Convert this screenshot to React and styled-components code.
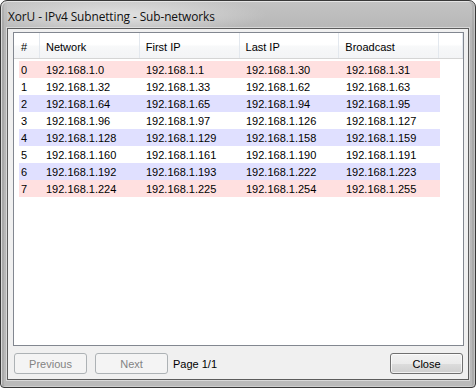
import React from "react";
import styled, { createGlobalStyle } from "styled-components";

const GlobalStyle = createGlobalStyle`
  html, body {
    margin: 0;
    padding: 0;
    background: #ffffff;
  }
  body {
    font-family: "Liberation Sans", Arial, sans-serif;
    font-size: 11px;
  }
`;

const subnets = [
  ["192.168.1.0", "192.168.1.1", "192.168.1.30", "192.168.1.31"],
  ["192.168.1.32", "192.168.1.33", "192.168.1.62", "192.168.1.63"],
  ["192.168.1.64", "192.168.1.65", "192.168.1.94", "192.168.1.95"],
  ["192.168.1.96", "192.168.1.97", "192.168.1.126", "192.168.1.127"],
  ["192.168.1.128", "192.168.1.129", "192.168.1.158", "192.168.1.159"],
  ["192.168.1.160", "192.168.1.161", "192.168.1.190", "192.168.1.191"],
  ["192.168.1.192", "192.168.1.193", "192.168.1.222", "192.168.1.223"],
  ["192.168.1.224", "192.168.1.225", "192.168.1.254", "192.168.1.255"],
];

// first and last subnet are pink, the rest alternate white / lavender
const rowTone = (i, n) => {
  if (i === 0 || i === n - 1) return "pink";
  return i % 2 === 0 ? "blue" : "plain";
};

const App = () => {
  return (
    <>
      <GlobalStyle />
      <Window>
        <TitleBar>
          <Title>XorU - IPv4 Subnetting - Sub-networks</Title>
        </TitleBar>
        <Client>
          <ListView>
            <Header>
              <HeadCell width={26}>#</HeadCell>
              <HeadCell width={100}>Network</HeadCell>
              <HeadCell width={100}>First IP</HeadCell>
              <HeadCell width={100}>Last IP</HeadCell>
              <HeadCell width={100}>Broadcast</HeadCell>
              <HeadFiller />
            </Header>
            <Rows>
              {subnets.map((s, i) => (
                <Row key={i} tone={rowTone(i, subnets.length)}>
                  <IndexCell>{i}</IndexCell>
                  {s.map((ip) => (
                    <Cell key={ip}>{ip}</Cell>
                  ))}
                </Row>
              ))}
            </Rows>
          </ListView>
          <Footer>
            <Button disabled>Previous</Button>
            <Button disabled>Next</Button>
            <PageLabel>Page 1/1</PageLabel>
            <Spacer />
            <Button>Close</Button>
          </Footer>
        </Client>
      </Window>
    </>
  );
};

export default App;

const Window = styled.div`
  box-sizing: border-box;
  width: 476px;
  height: 388px;
  display: flex;
  flex-direction: column;
  border: 1px solid #383838;
  border-radius: 7px 7px 4px 4px;
  padding: 0 6px 7px 6px;
  background: linear-gradient(to bottom, #c3c3c3 0px, #b6b6b6 30px, #bababa 100%);
  box-shadow: inset 1px 1px 0 rgba(255, 255, 255, 0.55),
    inset -1px -1px 0 rgba(255, 255, 255, 0.3),
    inset 3px 0 0 rgba(0, 0, 0, 0.08), inset -3px 0 0 rgba(0, 0, 0, 0.08);
`;

const TitleBar = styled.div`
  height: 27px;
  display: flex;
  align-items: center;
  padding-left: 1px;
  background: radial-gradient(
    ellipse 150px 20px at 110px 14px,
    rgba(228, 228, 228, 0.95),
    rgba(228, 228, 228, 0) 100%
  );
`;

const Title = styled.span`
  font-family: "Open Sans", "Noto Sans", sans-serif;
  font-size: 11.9px;
  color: #101010;
  letter-spacing: -0.1px;
  margin-top: 2px;
`;

const Client = styled.div`
  flex: 1;
  display: flex;
  flex-direction: column;
  border: 1px solid #5c5c5c;
  box-shadow: 0 0 0 1px rgba(255, 255, 255, 0.45);
  background: #f0f0f0;
  padding: 3px 4px 5px 5px;
`;

const ListView = styled.div`
  flex: 1;
  border: 1px solid #828790;
  background: #ffffff;
  display: flex;
  flex-direction: column;
`;

const Header = styled.div`
  display: flex;
  height: 25px;
  background: linear-gradient(to bottom, #ffffff 0%, #ffffff 45%, #f7f8f9 55%, #f3f4f6 100%);
  border-bottom: 1px solid #d5d5d5;
`;

const HeadCell = styled.div`
  box-sizing: border-box;
  width: ${(p) => p.width}px;
  padding-left: 6px;
  padding-top: 2px;
  display: flex;
  align-items: center;
  color: #000000;
  border-right: 1px solid #e3e8ee;
  &:first-child {
    padding-left: 7px;
  }
`;

const HeadFiller = styled.div`
  width: 23px;
  border-right: 1px solid #e3e8ee;
`;

const Rows = styled.div`
  display: flex;
  flex-direction: column;
  padding: 2px 0 0 5px;
`;

const toneColors = {
  pink: "#ffe0e0",
  blue: "#e0e0ff",
  plain: "#ffffff",
};

const Row = styled.div`
  display: flex;
  width: 421px;
  height: 17px;
  align-items: center;
  background: ${(p) => toneColors[p.tone]};
  color: #000000;
`;

const IndexCell = styled.div`
  width: 21px;
  padding-left: 2px;
  box-sizing: border-box;
`;

const Cell = styled.div`
  width: 100px;
  padding-left: 6px;
  box-sizing: border-box;
`;

const Footer = styled.div`
  display: flex;
  align-items: center;
  gap: 8px;
  margin-top: 7px;
  padding-left: 1px;
  padding-right: 1px;
`;

const Spacer = styled.div`
  flex: 1;
`;

const Button = styled.button`
  box-sizing: border-box;
  width: 73px;
  height: 21px;
  padding: 0;
  font-family: "Liberation Sans", Arial, sans-serif;
  font-size: 11px;
  border-radius: 3px;
  border: 1px solid #707070;
  color: #000000;
  background: linear-gradient(
    to bottom,
    #f2f2f2 0%,
    #ebebeb 50%,
    #dddddd 51%,
    #cfcfcf 100%
  );
  box-shadow: inset 0 0 0 1px rgba(255, 255, 255, 0.7);
  &:disabled {
    border-color: #adb2b5;
    background: #f4f4f4;
    color: #838383;
    box-shadow: none;
  }
`;

const PageLabel = styled.span`
  margin-left: -3px;
  color: #000000;
`;
